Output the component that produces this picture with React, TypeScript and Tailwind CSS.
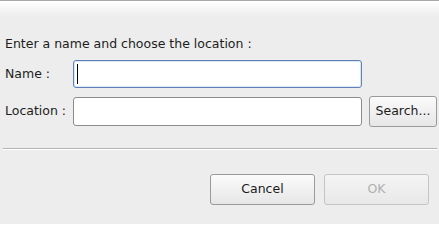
export default function App() {
  return (
    <div
      className="flex h-[224px] w-[439px] flex-col overflow-hidden bg-[#ededed] text-[12.5px] text-[#1c1c1c]"
      style={{ fontFamily: '"DejaVu Sans", sans-serif' }}
    >
      {/* Title strip */}
      <div className="h-[16px] shrink-0 border-t border-[#a8a8a8] bg-gradient-to-b from-white to-[#ededed]" />

      <p className="mt-[21px] h-[14px] pl-[5px] leading-[14px]">Enter a name and choose the location :</p>

      {/* Name */}
      <div className="mt-[9px] flex h-[28px] items-center">
        <label className="w-[73px] shrink-0 pl-[5px]">Name :</label>
        <div className="flex h-[28px] w-[289px] items-center rounded-[3px] border border-[#5f82b9] bg-white pl-[3px] shadow-[inset_0_0_0_1px_#dce6f3]">
          <span className="h-[20px] w-px bg-black" />
        </div>
      </div>

      {/* Location */}
      <div className="mt-[8px] flex h-[31px] items-center">
        <label className="w-[73px] shrink-0 pl-[5px]">Location :</label>
        <div className="h-[29px] w-[289px] rounded-[3px] border border-[#8c8c8c] bg-white" />
        <button className="ml-[7px] h-[31px] w-[68px] rounded-[3px] border border-[#9a9a9a] bg-gradient-to-b from-[#fbfbfb] to-[#e6e6e6] text-[#1c1c1c]">
          Search...
        </button>
      </div>

      {/* Separator */}
      <div className="ml-[3px] mr-[2px] mt-[21px] h-[2px] border-t border-[#b4b4b4] bg-white" />

      {/* Actions */}
      <div className="mt-[24px] flex justify-end gap-[9px] pr-[10px]">
        <button className="h-[31px] w-[105px] rounded-[3px] border border-[#9a9a9a] bg-gradient-to-b from-[#fbfbfb] to-[#e6e6e6] text-[#1c1c1c]">
          Cancel
        </button>
        <button
          disabled
          className="h-[31px] w-[105px] rounded-[3px] border border-[#c4c4c4] bg-gradient-to-b from-[#f4f4f4] to-[#e8e8e8] text-[#b0b0b0]"
        >
          OK
        </button>
      </div>
    </div>
  )
}
